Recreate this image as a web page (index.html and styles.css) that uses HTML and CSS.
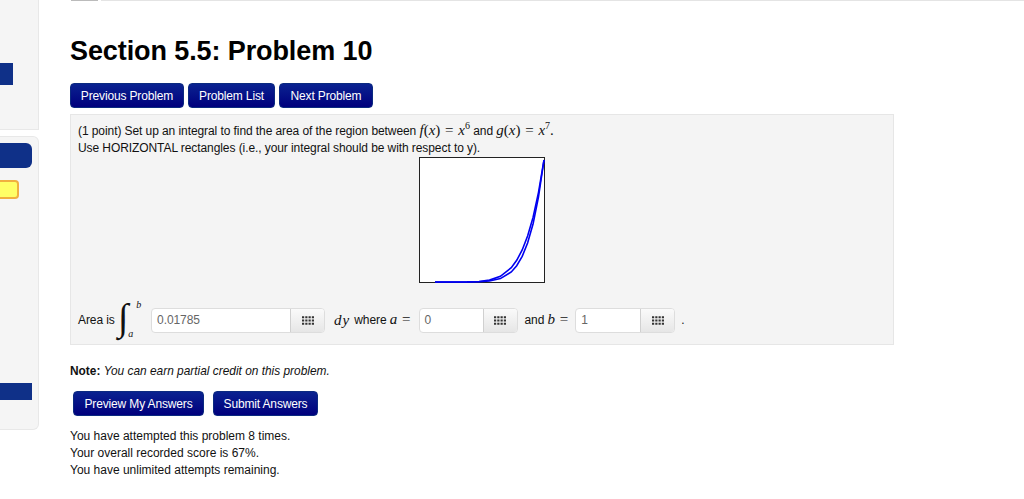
FILE: index.html
```html
<!DOCTYPE html>
<html lang="en">
<head>
    <meta charset="UTF-8">
    <meta name="viewport" content="width=device-width, initial-scale=1.0">
    <title>Section 5.5: Problem 10</title>
    <link rel="stylesheet" href="styles.css">
</head>
<body>
    <div class="page">
        <div class="sidebar">
            <div class="side-panel side-top">
                <div class="side-active"></div>
            </div>
            <div class="side-panel side-bottom">
                <div class="side-pill"></div>
                <div class="side-yellow"></div>
                <div class="side-bar"></div>
            </div>
        </div>

        <div class="main">
            <div class="top-rule">
                <div class="top-tab"></div>
                <div class="top-line"></div>
            </div>

            <h1>Section 5.5: Problem 10</h1>

            <div class="nav-buttons">
                <a class="btn btn-prev">Previous Problem</a>
                <a class="btn btn-list">Problem List</a>
                <a class="btn btn-next">Next Problem</a>
            </div>

            <div class="problem">
                <p>(1 point) Set up an integral to find the area of the region between <span class="math"><i>f</i>(<i>x</i>) = <i>x</i><sup>6</sup></span> and <span class="math"><i>g</i>(<i>x</i>) = <i>x</i><sup>7</sup>.</span></p>
                <p>Use HORIZONTAL rectangles (i.e., your integral should be with respect to y).</p>

                <svg class="graph" width="126" height="126" viewBox="0 0 126 126">
                    <rect x="0.5" y="0.5" width="125" height="125" fill="#fff" stroke="#222"/>
                    <polyline class="curve" points="16,125 48,124.9 60,124.5 70.5,123.1 81.4,119.3 92.3,110.7 97.7,103.3 103.2,93 108.6,79 114.1,60.2 119.5,35.3 125,3"/>
                    <polyline class="curve" points="16,125 48,125 60,124.8 70.5,124 81.4,121.6 92.3,115 97.7,108.7 103.2,99.4 108.6,86 114.1,66.7 119.5,39.8 125,3"/>
                </svg>

                <div class="answer-row">
                    <span class="area-label">Area is</span>
                    <span class="integral">
                        <span class="int-sign">∫</span>
                        <span class="int-limits"><i class="limit-b">b</i><i>a</i></span>
                    </span>
                    <span class="input-group group-wide">
                        <span class="input-text">0.01785</span>
                        <span class="input-addon">
                            <svg width="12" height="9" viewBox="0 0 11 8" fill="#333">
                                <path d="M0 0h2v2H0zM3 0h2v2H3zM6 0h2v2H6zM9 0h2v2H9zM0 3h2v2H0zM3 3h2v2H3zM6 3h2v2H6zM9 3h2v2H9zM0 6h2v2H0zM3 6h2v2H3zM6 6h2v2H6zM9 6h2v2H9z"/>
                            </svg>
                        </span>
                    </span>
                    <span class="math math-dy"><i>dy</i></span>
                    <span class="where">where <span class="math"><i>a</i> =</span></span>
                    <span class="input-group group-a">
                        <span class="input-text">0</span>
                        <span class="input-addon">
                            <svg width="12" height="9" viewBox="0 0 11 8" fill="#333">
                                <path d="M0 0h2v2H0zM3 0h2v2H3zM6 0h2v2H6zM9 0h2v2H9zM0 3h2v2H0zM3 3h2v2H3zM6 3h2v2H6zM9 3h2v2H9zM0 6h2v2H0zM3 6h2v2H3zM6 6h2v2H6zM9 6h2v2H9z"/>
                            </svg>
                        </span>
                    </span>
                    <span class="where where-and">and <span class="math"><i>b</i> =</span></span>
                    <span class="input-group group-b">
                        <span class="input-text">1</span>
                        <span class="input-addon">
                            <svg width="12" height="9" viewBox="0 0 11 8" fill="#333">
                                <path d="M0 0h2v2H0zM3 0h2v2H3zM6 0h2v2H6zM9 0h2v2H9zM0 3h2v2H0zM3 3h2v2H3zM6 3h2v2H6zM9 3h2v2H9zM0 6h2v2H0zM3 6h2v2H3zM6 6h2v2H6zM9 6h2v2H9z"/>
                            </svg>
                        </span>
                    </span>
                    <span class="period">.</span>
                </div>
            </div>

            <p class="note"><b>Note:</b> <i>You can earn partial credit on this problem.</i></p>

            <div class="submit-buttons">
                <a class="btn btn-preview">Preview My Answers</a>
                <a class="btn btn-submit">Submit Answers</a>
            </div>

            <div class="attempts">
                <p>You have attempted this problem 8 times.</p>
                <p>Your overall recorded score is 67%.</p>
                <p>You have unlimited attempts remaining.</p>
            </div>
        </div>
    </div>
</body>
</html>
```

FILE: styles.css
```css
* {
    margin: 0;
    padding: 0;
    box-sizing: border-box;
}

html, body {
    height: 499px;
    overflow: hidden;
}

body {
    font-family: "Liberation Sans", Arial, sans-serif;
    font-size: 12px;
    color: #111;
    background: white;
}

.page {
    display: flex;
}

/* Left menu, cut off by the window edge */
.sidebar {
    width: 39px;
    flex-shrink: 0;
}

.side-panel {
    background: #f5f5f5;
    border: 1px solid #e8e8e8;
    border-left: none;
}

.side-top {
    height: 130px;
    padding-top: 63px;
    border-top: none;
}

.side-bottom {
    height: 294px;
    margin-top: 6px;
    padding-top: 6px;
    border-radius: 0 6px 6px 0;
}

.side-active {
    width: 13px;
    height: 22px;
    background: #0f3088;
}

.side-pill {
    width: 32px;
    height: 25px;
    background: #0f3088;
    border-radius: 0 6px 6px 0;
}

.side-yellow {
    width: 19px;
    height: 19px;
    margin-top: 12px;
    background: #ffff66;
    border: 2px solid #f0b040;
    border-left: none;
    border-radius: 0 4px 4px 0;
}

.side-bar {
    width: 32px;
    height: 17px;
    margin-top: 184px;
    background: #0f3088;
}

.main {
    margin-left: 31px;
    width: 954px;
}

.top-rule {
    display: flex;
    gap: 3px;
    height: 1px;
    margin-left: 1px;
}

.top-tab {
    width: 27px;
    background: #bbb;
}

.top-line {
    flex: 1;
    background: #e4e4e4;
}

h1 {
    font-size: 27px;
    line-height: 32px;
    font-weight: 700;
    color: #000;
    margin-top: 34px;
    letter-spacing: -0.1px;
}

.btn {
    display: flex;
    align-items: center;
    justify-content: center;
    height: 25px;
    font-size: 12px;
    letter-spacing: -0.15px;
    color: white;
    background: linear-gradient(#0a2290, #00007d);
    border: 1px solid #0b2a80;
    border-radius: 4px;
}

.nav-buttons {
    display: flex;
    gap: 4px;
    margin-top: 16px;
}

.btn-prev { width: 114px; }
.btn-list { width: 87px; }
.btn-next { width: 94px; }

.problem {
    width: 824px;
    height: 231px;
    margin-top: 6px;
    padding: 8px 7px;
    background: #f4f4f4;
    border: 1px solid #e6e6e6;
    font-size: 12px;
    letter-spacing: -0.08px;
    line-height: 17px;
}

.math {
    font-family: "Liberation Serif", "Times New Roman", serif;
    font-size: 15px;
    line-height: 0;
    letter-spacing: 0;
    word-spacing: 1px;
}

.math sup {
    font-size: 10px;
    line-height: 0;
}

.graph {
    display: block;
    margin: 0 auto;
}

.curve {
    fill: none;
    stroke: #0000f0;
    stroke-width: 1.6;
}

.answer-row {
    display: flex;
    align-items: center;
    height: 40px;
    margin-top: 17px;
}

.integral {
    display: flex;
    height: 42px;
    margin-left: 3px;
    font-family: "Liberation Serif", "Times New Roman", serif;
}

.int-sign {
    font-size: 38px;
    line-height: 37px;
    font-style: italic;
}

.int-limits {
    display: flex;
    flex-direction: column;
    justify-content: space-between;
    height: 40px;
    font-size: 10px;
    line-height: 11px;
}

.limit-b {
    margin-left: 8px;
}

.input-group {
    display: flex;
    height: 25px;
    width: 99px;
    background: white;
    border: 1px solid #ddd;
    border-radius: 4px;
}

.group-wide {
    width: 174px;
    margin-left: 10px;
}

.group-a {
    margin-left: 8px;
}

.group-b {
    width: 100px;
    margin-left: 7px;
}

.input-text {
    flex: 1;
    padding-left: 5px;
    line-height: 23px;
    font-size: 12px;
    color: #666;
}

.input-addon {
    display: flex;
    align-items: center;
    justify-content: center;
    width: 34px;
    background: linear-gradient(#fafafa, #e6e6e6);
    border-left: 1px solid #d0d0d0;
    border-radius: 0 3px 3px 0;
}

.math-dy {
    margin-left: 9px;
    letter-spacing: 1px;
}

.where {
    margin-left: 4px;
}

.where-and {
    margin-left: 7px;
}

.period {
    margin-left: 6px;
}

.note {
    margin-top: 18px;
    line-height: 17px;
    font-size: 11.9px;
}

.submit-buttons {
    display: flex;
    gap: 9px;
    margin: 11px 0 0 3px;
}

.btn-preview { width: 131px; }
.btn-submit { width: 105px; }

.attempts {
    margin-top: 12px;
    line-height: 17px;
}
```
